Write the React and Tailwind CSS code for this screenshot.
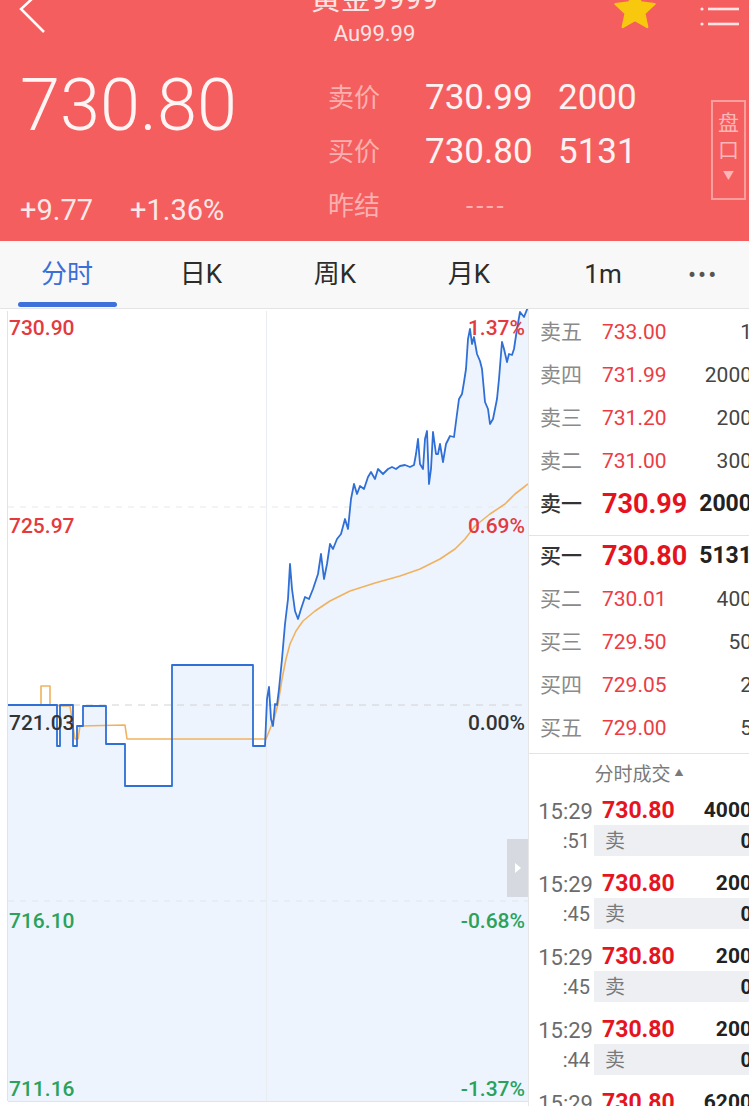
import React from 'react';

const FONT = "font-['Roboto','Noto_Sans_CJK_SC',sans-serif]";

// price line (image coords, chart starts at y=310)
const BLUE = [
  [8, 706], [57, 706], [57, 747], [60, 747], [60, 706], [73, 706], [73, 747], [77, 747], [77, 727], [83, 727],
  [83, 707], [106, 707], [106, 745], [125, 745], [125, 787], [172, 787], [172, 666], [253, 666], [253, 747],
  [265, 747], [267, 700], [269, 688], [271, 720], [273, 727], [275, 705], [277, 706], [279, 690], [282, 660],
  [285, 625], [288, 600], [290, 565], [292, 590], [295, 612], [298, 620], [301, 610], [305, 598], [309, 600],
  [313, 590], [318, 575], [321, 555], [324, 580], [327, 565], [330, 545], [333, 550], [337, 540], [341, 535],
  [345, 520], [348, 530], [351, 500], [354, 485], [357, 495], [360, 487], [364, 490], [368, 478], [371, 473],
  [375, 480], [378, 470], [383, 475], [388, 470], [392, 468], [396, 470], [400, 467], [405, 466], [410, 468],
  [414, 466], [416, 455], [418, 440], [420, 465], [423, 470], [425, 440], [427, 432], [429, 485], [431, 470],
  [433, 433], [436, 455], [438, 455], [440, 445], [443, 463], [446, 445], [450, 437], [454, 438], [457, 415],
  [459, 400], [462, 395], [464, 383], [466, 370], [468, 340], [470, 330], [472, 345], [474, 338], [477, 355],
  [480, 362], [482, 370], [485, 403], [488, 410], [490, 425], [493, 420], [495, 410], [497, 400], [499, 380],
  [501, 355], [502, 343], [504, 350], [507, 363], [509, 355], [512, 356], [514, 350], [517, 330], [520, 313],
  [524, 318], [528, 308],
];

const ORANGE = [
  [8, 706], [41, 706], [41, 687], [50, 687], [50, 706], [57, 706], [60, 707], [70, 707], [73, 727], [75, 740],
  [78, 740], [80, 727], [125, 726], [127, 740], [266, 740], [270, 730], [274, 720], [278, 705], [282, 680],
  [286, 660], [290, 645], [296, 632], [303, 622], [315, 612], [330, 602], [350, 592], [375, 584], [400, 577],
  [420, 570], [440, 560], [455, 550], [465, 540], [475, 527], [490, 515], [505, 505], [515, 495], [528, 485],
];

const toPts = (arr) => arr.map(([x, y]) => `${x},${y - 310}`).join(' ');

const ASKS = [
  { label: '卖五', price: '733.00', vol: '1' },
  { label: '卖四', price: '731.99', vol: '2000' },
  { label: '卖三', price: '731.20', vol: '200' },
  { label: '卖二', price: '731.00', vol: '300' },
  { label: '卖一', price: '730.99', vol: '2000', main: true },
];

const BIDS = [
  { label: '买一', price: '730.80', vol: '5131', main: true },
  { label: '买二', price: '730.01', vol: '400' },
  { label: '买三', price: '729.50', vol: '50' },
  { label: '买四', price: '729.05', vol: '2' },
  { label: '买五', price: '729.00', vol: '5' },
];

const TRADES = [
  { sec: ':51', vol: '4000' },
  { sec: ':45', vol: '200' },
  { sec: ':45', vol: '200' },
  { sec: ':44', vol: '200' },
  { sec: ':44', vol: '6200' },
];

const TABS = ['分时', '日K', '周K', '月K', '1m'];

function BookRow({ row }) {
  return (
    <div className="h-[43px] flex items-center pl-[11px] relative">
      <span className={`w-[62px] text-[21px] ${row.main ? 'text-[#333] font-medium' : 'text-[#8a8a8a]'}`}>{row.label}</span>
      <span className={row.main ? 'text-[27px] font-bold text-[#e5131d]' : 'text-[21px] text-[#ec3c43]'}>{row.price}</span>
      <span className={`absolute right-[-3px] ${row.main ? 'text-[23px] font-bold text-[#222]' : 'text-[21px] text-[#444]'}`}>{row.vol}</span>
    </div>
  );
}

export default function App() {
  return (
    <div className={`w-[749px] h-[1106px] overflow-hidden bg-white ${FONT}`}>
      {/* header */}
      <div className="h-[241px] bg-[#f55e5e] text-white relative">
        <div className="h-[60px] relative flex justify-center">
          <svg className="absolute left-0 top-0" width="60" height="50" viewBox="0 0 60 50">
            <polyline points="45,-13 21,9 44,32" fill="none" stroke="#fff" strokeWidth="2.5" />
          </svg>
          <div className="flex flex-col items-center">
            <div className="mt-[-18px] h-[40px] leading-[34px] text-[30px] text-[#fde4e4]">黄金9999</div>
            <div className="h-[24px] leading-[24px] text-[22px] text-[#fde4e4]">Au99.99</div>
          </div>
          <svg className="absolute left-[612px] top-[-13px]" width="46" height="44" viewBox="0 0 24 23">
            <path d="M12 1.5l3.1 6.6 7.1.8-5.3 4.9 1.5 7.1L12 17.3l-6.4 3.6 1.5-7.1-5.3-4.9 7.1-.8z" fill="#f8c80f" stroke="#f8c80f" strokeWidth="1.2" strokeLinejoin="round" />
          </svg>
          <svg className="absolute left-[698px] top-0" width="46" height="34" viewBox="0 0 46 34">
            <circle cx="4" cy="9" r="1.6" fill="#fde4e4" />
            <circle cx="4" cy="24" r="1.6" fill="#fde4e4" />
            <line x1="10" y1="9" x2="41" y2="9" stroke="#fde4e4" strokeWidth="2.6" />
            <line x1="10" y1="24" x2="41" y2="24" stroke="#fde4e4" strokeWidth="2.6" />
          </svg>
        </div>

        <div className="flex">
          <div className="w-[306px] pl-[20px]">
            <div className="mt-[8px] h-[76px] leading-[76px] text-[72px] font-light text-[#fff5f5]">730.80</div>
            <div className="mt-[50px] flex text-[29px] leading-[32px] text-[#fde8e8]">
              <span className="w-[110px]">+9.77</span>
              <span>+1.36%</span>
            </div>
          </div>
          <div className="w-[382px] pl-[22px] mt-[11px]">
            {[
              ['卖价', '730.99', '2000'],
              ['买价', '730.80', '5131'],
            ].map(([l, p, v]) => (
              <div key={l} className="flex items-center h-[54px]">
                <span className="w-[97px] text-[26px] text-[#fbb0b0]">{l}</span>
                <span className="w-[133px] text-[35px] text-[#fff2f2]">{p}</span>
                <span className="text-[35px] text-[#fff2f2]">{v}</span>
              </div>
            ))}
            <div className="flex items-center h-[54px]">
              <span className="w-[138px] text-[26px] text-[#fbb0b0]">昨结</span>
              <span className="text-[26px] text-[#fbb0b0] tracking-[3px]">----</span>
            </div>
          </div>
          <div className="mt-[40px] ml-[23px] w-[35px] h-[100px] border-2 border-[#fa9e9e] flex flex-col items-center pt-[8px] text-[#fbb7b7]">
            <span className="text-[21px] leading-[26px]">盘</span>
            <span className="text-[21px] leading-[28px]">口</span>
            <span className="text-[11px] leading-[18px] mt-[4px]">▼</span>
          </div>
        </div>
      </div>

      {/* tabs */}
      <div className="h-[68px] bg-[#f8f8f8] border-b border-[#e4e4e4] flex relative">
        {TABS.map((t, i) => (
          <div key={t} className="w-[134px] flex flex-col items-center justify-center relative">
            <span className={`text-[26px] ${i === 0 ? 'text-[#3a6fd8]' : 'text-[#2c2c2c]'}`}>{t}</span>
            {i === 0 && <div className="absolute bottom-[1px] left-[18px] w-[99px] h-[5px] rounded-full bg-[#3e71d9]" />}
          </div>
        ))}
        <div className="flex-1 flex items-center pl-[18px] text-[24px] text-[#555] tracking-[2px]">•••</div>
      </div>

      {/* body */}
      <div className="flex h-[797px]">
        <div className="w-[528px] relative shrink-0">
          <svg className="absolute inset-0" width="528" height="797" viewBox="0 0 528 797">
            <polygon points={`${toPts(BLUE)} 528,792 8,792`} fill="#edf4fd" />
            <line x1="7.5" y1="2" x2="7.5" y2="792" stroke="#e3e3e3" />
            <line x1="8" y1="792.5" x2="528" y2="792.5" stroke="#e3e3e3" />
            <line x1="266.5" y1="2" x2="266.5" y2="792" stroke="#e9edf1" />
            <line x1="8" y1="198" x2="528" y2="198" stroke="#e8e8e8" strokeDasharray="6 6" />
            <line x1="8" y1="396" x2="528" y2="396" stroke="#d2d2d2" strokeDasharray="7 6" />
            <line x1="8" y1="592" x2="528" y2="592" stroke="#e3e6ea" strokeDasharray="6 6" />
            <polyline points={toPts(ORANGE)} fill="none" stroke="#f1b25f" strokeWidth="1.6" strokeLinejoin="round" />
            <polyline points={toPts(BLUE)} fill="none" stroke="#2f6fd6" strokeWidth="1.8" strokeLinejoin="round" />
          </svg>
          {/* axis labels */}
          <div className="absolute inset-x-0 top-0 h-full text-[21px] font-medium">
            <span className="absolute left-[9px] top-[4px] text-[#e43a3f]">730.90</span>
            <span className="absolute right-[3px] top-[4px] text-[#e43a3f]">1.37%</span>
            <span className="absolute left-[9px] top-[202px] text-[#e43a3f]">725.97</span>
            <span className="absolute right-[3px] top-[202px] text-[#e43a3f]">0.69%</span>
            <span className="absolute left-[9px] top-[399px] text-[#333]">721.03</span>
            <span className="absolute right-[3px] top-[399px] text-[#333]">0.00%</span>
            <span className="absolute left-[9px] top-[597px] text-[#2aa25c]">716.10</span>
            <span className="absolute right-[3px] top-[597px] text-[#2aa25c]">-0.68%</span>
            <span className="absolute left-[9px] top-[765px] text-[#2aa25c]">711.16</span>
            <span className="absolute right-[3px] top-[765px] text-[#2aa25c]">-1.37%</span>
          </div>
          <div className="absolute right-0 top-[530px] w-[21px] h-[58px] bg-[#d6dae0] flex items-center justify-center">
            <svg width="8" height="12" viewBox="0 0 8 12"><path d="M1 1l6 5-6 5z" fill="#fff" /></svg>
          </div>
        </div>

        {/* right panel */}
        <div className="flex-1 border-l border-[#e6e6e6] overflow-hidden pt-[2px]">
          {ASKS.map((r) => <BookRow key={r.label} row={r} />)}
          <div className="h-[10px] border-b border-[#e3e3e3] mb-[-3px]" />
          <div className="pt-[2px]">
            {BIDS.map((r) => <BookRow key={r.label} row={r} />)}
          </div>
          <div className="border-t border-[#e3e3e3] h-[44px] flex items-center justify-center text-[19px] text-[#7a7a7a] mt-[3px]">
            <span>分时成交</span>
            <span className="text-[9px] ml-[4px] mb-[4px]">▲</span>
          </div>
          {TRADES.map((t, i) => (
            <div key={i} className="h-[73px]">
              <div className="h-[28px] flex items-center relative">
                <span className="w-[64px] text-right text-[22px] text-[#6b6b6b]">15:29</span>
                <span className="ml-[9px] text-[23px] font-bold text-[#e5141e]">730.80</span>
                <span className="absolute right-[-3px] text-[21px] font-bold text-[#222]">{t.vol}</span>
              </div>
              <div className="h-[31px] flex items-center">
                <span className="w-[62px] text-right text-[20px] text-[#6b6b6b] pr-[1px]">{t.sec}</span>
                <div className="flex-1 h-full ml-[3px] bg-[#edeff3] flex items-center pl-[11px] relative">
                  <span className="text-[20px] text-[#7a7a7a]">卖</span>
                  <span className="absolute right-[-3px] text-[20px] font-bold text-[#222]">0</span>
                </div>
              </div>
            </div>
          ))}
        </div>
      </div>
    </div>
  );
}
